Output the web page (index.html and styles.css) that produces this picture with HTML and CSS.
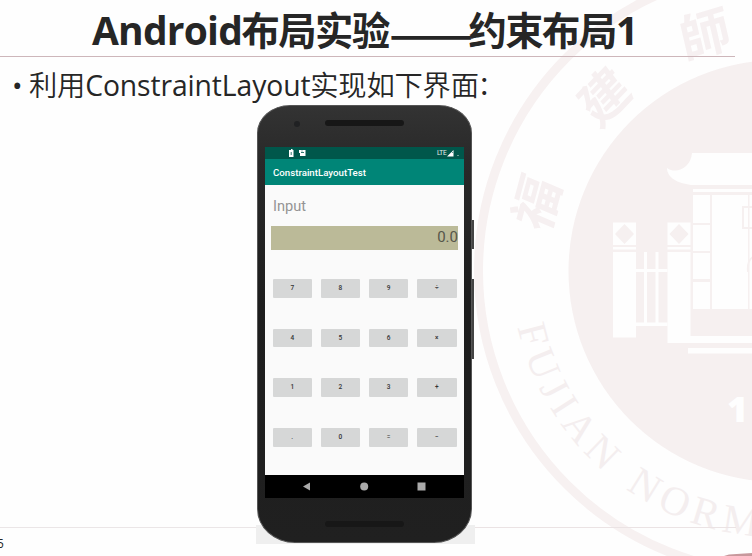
FILE: index.html
```html
<!DOCTYPE html>
<html lang="zh-CN">
<head>
<meta charset="utf-8">
<title>Android布局实验</title>
<link rel="stylesheet" href="styles.css">
</head>
<body>
<main class="slide">
  <svg class="seal" viewBox="0 0 752 556" aria-hidden="true">
    <circle class="seal-ring" cx="781" cy="271" r="302.5"/>
    <circle class="seal-fill" cx="779.5" cy="271" r="211"/>
    <g class="seal-hanzi">
      <text transform="translate(537 203) rotate(-75) skewX(-8)" y="18">福</text>
      <text transform="translate(605 97) rotate(-46) skewX(-8)" y="18">建</text>
      <text transform="translate(705 35) rotate(-17) skewX(-4)" y="18">師</text>
    </g>
    <path id="arc" fill="none" d="M517.5 327 A269 269 0 0 0 1049 271"/>
    <text class="seal-latin"><textPath href="#arc" textLength="340">FUJIAN<tspan dx="5"> </tspan>NORM</textPath></text>
    <g class="seal-gate">
      <path d="M667 168C677 175 691 167 692 153H752V185H691C678 183 667 178 667 168Z"/>
      <path d="M693 189H752V192H693ZM693 195H710V223H693ZM712 195H748V309H712ZM749.500 195H752V309H749.500ZM693 225H710V251H693ZM693 253H710V279H693ZM693 282H710V309H693Z"/>
      <path d="M613 222.500H636V245H613ZM613 247H636V249.500H613ZM613 252H636V337.500H613Z"/>
      <path d="M667.500 222.500H690.500V245H667.500ZM667.500 247H690.500V249.500H667.500ZM667.500 252H690.500V336H752V343H667.500ZM688 348H752V353.500H688Z"/>
      <path d="M644 252H647V323H644ZM655.500 252H658.500V323H655.500ZM636 269H667.500V272H636ZM636 322.500H667.500V326H636Z"/>
      <text x="727" y="422">1</text>
    </g>
    <path class="seal-fill" d="M624.500 224L634 234L624.500 244L615 234ZM679 224L688.500 234L679 244L669.500 234Z"/>
    <path class="seal-line" d="M753 207H743V228H753M753 257Q747 260 748 272"/>
  </svg>

  <h1 class="title"><span class="latin">Android</span><span class="han">布局实验</span><span class="dash">——</span><span class="han">约束布局</span><span class="one">1</span></h1>

  <section class="body">
    <p class="bullet"><span class="dot">•</span><span class="han">利用</span><span class="latin">ConstraintLayout</span><span class="han">实现如下界面</span><span class="colon">：</span></p>
    <div class="picture">
      <div class="phone">
        <div class="forehead"><i class="camera"></i><i class="speaker"></i></div>
        <div class="screen">
          <div class="status">
            <svg class="notes" viewBox="0 0 20 8"><path fill="#fff" d="M1 1H2V0H3.500V1H4.500V8H0V1ZM10 1H16.500V7H11V4H10Z"/><path stroke="#00574b" stroke-width=".8" d="M2.200 3V6M12 3.500H15M13 1.500V2.500" fill="none"/></svg>
            <span class="lte">LTE</span>
            <svg class="signal" viewBox="0 0 13 8"><path fill="#fff" d="M0 7.500L6.500 1V7.500Z"/><path stroke="#00574b" stroke-width=".6" d="M4 2L6 4"/><path fill="#6b9a92" d="M10 6H12V7H10Z"/></svg>
          </div>
          <div class="appbar">ConstraintLayoutTest</div>
          <div class="app">
            <div class="label">Input</div>
            <div class="field">0.0</div>
            <div class="keys">
              <b>7</b><b>8</b><b>9</b><b>÷</b>
              <b>4</b><b>5</b><b>6</b><b>×</b>
              <b>1</b><b>2</b><b>3</b><b>+</b>
              <b>.</b><b>0</b><b>=</b><b>−</b>
            </div>
          </div>
          <svg class="nav" viewBox="0 0 199 23"><path d="M38 11.500L45 7.500V15.500ZM152.500 7.500H160.500V15.500H152.500Z"/><circle cx="99.200" cy="11.500" r="4"/></svg>
        </div>
        <div class="chin"><i class="speaker"></i></div>
      </div>
      <i class="power"></i>
      <i class="volume"></i>
    </div>
  </section>
  <footer class="footer"><span class="page">5</span><svg class="corner" viewBox="0 0 28 4"><path fill="#c8989c" d="M0 4L5 2.500L28 1V4Z"/></svg></footer>
</main>
</body>
</html>
```
FILE: styles.css
```css
* { box-sizing: border-box; }
body { margin: 0; background: #fff; }
.slide {
  position: relative;
  width: 752px;
  height: 556px;
  overflow: hidden;
  display: flex;
  flex-direction: column;
  background: #fefefe;
  color: #262626;
  font-family: "Open Sans", "Noto Sans CJK SC", sans-serif;
}
.seal { position: absolute; inset: 0; width: 752px; height: 556px; }
.seal-ring { fill: none; stroke: #f7f1f1; stroke-width: 9; }
.seal-fill { fill: #f6f0f0; }
.seal-line { fill: none; stroke: #f6f0f0; stroke-width: 2; }
.seal-hanzi { fill: #f6f0f1; font: 700 51px "Noto Sans CJK TC", sans-serif; text-anchor: middle; }
.seal-latin { fill: #f4eeef; font: 41px "Liberation Serif", serif; white-space: pre; }
.seal-gate { fill: #fefefe; font: 800 36px "Open Sans", sans-serif; }

.title, .body, .footer { position: relative; }
.title {
  flex: none;
  display: flex;
  width: 735px;
  height: 57px;
  margin: 0;
  padding-left: 92px;
  border-bottom: 1px solid #cdb6ba;
  font-size: 39px;
  line-height: 60px;
  font-weight: 700;
  white-space: nowrap;
}
.title span, .bullet span { flex: none; }
.title .latin { width: 150px; letter-spacing: -.8px; }
.title .han { width: 147px; margin-left: -.5px; margin-right: .5px; font-size: 38.300px; letter-spacing: -1.500px; line-height: 61px; }
.title .dash { width: 80px; font: 700 40px/64px "Noto Sans CJK SC", sans-serif; transform: scaleX(1.24); transform-origin: left; }
.title .one { width: 22px; }

.body { flex: none; height: 470px; }
.bullet {
  display: flex;
  height: 48px;
  margin: 0;
  padding-left: 12px;
  font-size: 28.300px;
  line-height: 56px;
  white-space: nowrap;
}
.bullet .dot { width: 17px; font-size: 28px; }
.bullet .han { font-weight: 350; letter-spacing: -.2px; }
.bullet .latin { width: 225px; letter-spacing: -.1px; }
.bullet .colon { width: 28px; margin-left: -1px; font-size: 26px; }

.picture {
  position: relative;
  width: 219px;
  height: 439px;
  margin-left: 256px;
  padding-left: 1px;
  background: linear-gradient(transparent 420px, #efefef 420px);
}
.phone {
  width: 215px;
  height: 438px;
  padding: 0 7px;
  border: 1px solid #555;
  border-radius: 33px 33px 38px 38px / 28px 28px 34px 34px;
  background: linear-gradient(#333 0, #292929 55px, #1d1d1d 200px, #202020);
}
.forehead { height: 41px; display: flex; align-items: flex-start; padding: 14px 0 0 29px; }
.camera { width: 6px; height: 6px; margin-top: 1px; border-radius: 50%; background: #202123; }
.speaker { width: 79px; height: 6px; border-radius: 3px; background: #171717; }
.forehead .speaker { margin-left: 25px; }
.screen { width: 199px; font-family: Roboto, sans-serif; }
.status { height: 12px; display: flex; align-items: center; padding-left: 24px; background: #00574b; }
.notes { width: 20px; height: 8px; }
.lte { margin-left: 128px; color: #e5efed; font-size: 6.500px; letter-spacing: -.3px; line-height: 12px; }
.signal { width: 13px; height: 8px; margin-left: 1px; }
.appbar { height: 26px; padding-left: 8px; background: #008577; color: #fff; font-size: 9.700px; font-weight: 500; line-height: 27px; }
.app { height: 290px; padding: 11px 6px 0; background: #fafafa; }
.label { height: 30px; padding-left: 2px; color: #949494; font-size: 14.600px; line-height: 20px; }
.field { height: 24px; background: #bbba98; color: #56564a; font-size: 15px; line-height: 22px; text-align: right; }
.keys { display: grid; grid-template-columns: repeat(4, 39.500px); column-gap: 8.700px; row-gap: 31.200px; padding: 29px 0 0 1.500px; }
.keys b { height: 18.500px; border-radius: 1px; background: #d6d7d7; color: #333; font-size: 6.500px; font-weight: 500; line-height: 18.500px; text-align: center; }
.nav { display: block; width: 199px; height: 23px; background: #000; fill: #aaa; }
.chin { display: flex; justify-content: center; padding-top: 23px; }
.power, .volume { position: absolute; left: 216px; width: 2px; background: #444; }
.power { top: 115px; height: 29px; }
.volume { top: 174px; height: 80px; }

.footer { flex: none; height: 29px; }
.footer::before { content: ""; position: absolute; top: 0; left: 0; width: 256px; height: 1px; background: #ebe6e7; }
.footer::after { content: ""; position: absolute; top: 0; left: 475px; width: 261px; height: 1px; background: #ebe3e4; }
.page { display: block; margin-left: -3px; padding-top: 8px; font-size: 12px; line-height: 17px; }
.corner { position: absolute; right: 0; bottom: 0; width: 28px; height: 4px; }
```
